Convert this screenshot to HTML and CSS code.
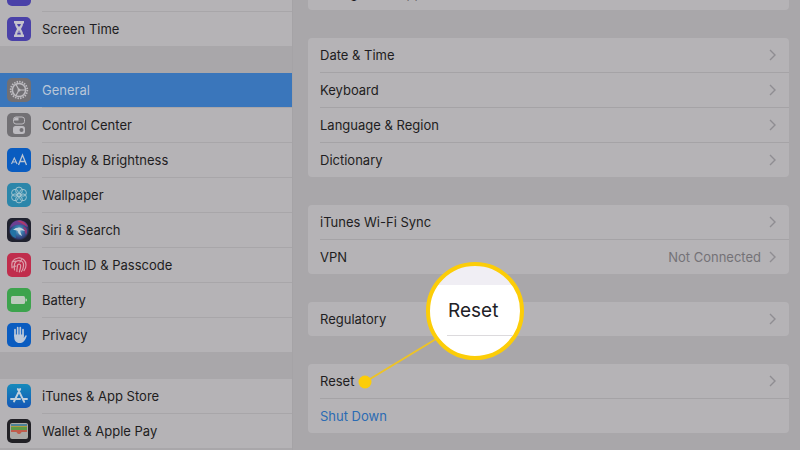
FILE: index.html
```html
<!DOCTYPE html>
<html lang="en">
<head>
<meta charset="utf-8">
<title>Settings</title>
<link rel="stylesheet" href="styles.css">
</head>
<body>
<svg class="defs" width="0" height="0" aria-hidden="true">
  <symbol id="chevron" viewBox="0 0 8 12"><path d="M1 1l5 5-5 5" fill="none" stroke="#8f8d92" stroke-width="1.4"/></symbol>
</svg>
<div class="settings">
<nav class="sidebar">
  <ul class="group">
    <li><a class="item" href="#dnd">
      <svg class="icon" viewBox="0 0 24 24"><rect width="24" height="24" rx="5" fill="#4a41a8"/><path d="M13 5a6 6 0 1 0 5 8A6 6 0 0 1 13 5z" fill="#c4c2cc"/></svg>
      <span class="label">Do Not Disturb</span></a></li>
    <li><a class="item" href="#screen-time">
      <svg class="icon" viewBox="0 0 24 24"><rect width="24" height="24" rx="5" fill="#4a41a8"/><path d="M7 4h10v2.500h-1c0 3-1.500 4-2 5.500.5 1.500 2 2.500 2 5.500h1V20H7v-2.500h1c0-3 1.500-4 2-5.500-.5-1.500-2-2.500-2-5.500H7z" fill="#c4c2cc"/><path d="M10 7h4l-1.500 3h-1zM11.500 13.500h1l1.500 4h-4z" fill="#4a41a8"/><path d="M12 9v7" stroke="#c4c2cc"/></svg>
      <span class="label">Screen Time</span></a></li>
  </ul>
  <ul class="group">
    <li><a class="item selected" href="#general">
      <svg class="icon" viewBox="0 0 24 24"><rect width="24" height="24" rx="5" fill="#727074"/><g fill="none" stroke="#bdbbc0"><circle cx="12" cy="12" r="8.3" stroke-width="1.8" stroke-dasharray="1.5 1.1"/><circle cx="12" cy="12" r="6.6" stroke-width="1.5"/><path d="M12 12h6M12 12l-3-5.500M12 12l-3 5.500" stroke-width="1.200"/></g><circle cx="12" cy="12" r="1.500" fill="#bdbbc0"/></svg>
      <span class="label">General</span></a></li>
    <li><a class="item" href="#control-center">
      <svg class="icon" viewBox="0 0 24 24"><rect width="24" height="24" rx="5" fill="#727074"/><rect x="6.500" y="4" width="11" height="7" rx="2.500" fill="none" stroke="#bdbbc0"/><path d="M7 7.500h4.500V4.500H9a2 2 0 0 0-2 2z" fill="#bdbbc0"/><rect x="6" y="13" width="12" height="8" rx="2.500" fill="#bdbbc0"/><circle cx="14.500" cy="17" r="2" fill="#727074"/></svg>
      <span class="label">Control Center</span></a></li>
    <li><a class="item" href="#display">
      <svg class="icon" viewBox="0 0 24 24"><rect width="24" height="24" rx="5" fill="#0a5cc0"/><g fill="none" stroke="#b9c4d4"><path d="M4.500 16l2.800-6 2.800 6M5.500 14h3.600" stroke-width="1.100"/><path d="M11.500 17l4-10 4 10M13 13.500h5" stroke-width="1.300"/></g></svg>
      <span class="label">Display &amp; Brightness</span></a></li>
    <li><a class="item" href="#wallpaper">
      <svg class="icon" viewBox="0 0 24 24"><rect width="24" height="24" rx="5" fill="#2b86aa"/><g fill="none" stroke="#9fc4d0"><circle cx="12" cy="7.500" r="3.400"/><circle cx="12" cy="16.500" r="3.400"/><circle cx="8" cy="9.800" r="3.400"/><circle cx="16" cy="9.800" r="3.400"/><circle cx="8" cy="14.300" r="3.400"/><circle cx="16" cy="14.300" r="3.400"/><circle cx="12" cy="12" r="2"/></g></svg>
      <span class="label">Wallpaper</span></a></li>
    <li><a class="item" href="#siri">
      <svg class="icon" viewBox="0 0 24 24"><defs><radialGradient id="siri"><stop offset="0" stop-color="#a9c6d8"/><stop offset=".35" stop-color="#3a7fb0"/><stop offset=".8" stop-color="#33407c"/><stop offset="1" stop-color="#20222f"/></radialGradient></defs><rect width="24" height="24" rx="5" fill="#20222f"/><circle cx="12" cy="12" r="10.500" fill="url(#siri)"/><path d="M3 10C4 3 12 0 18 4c2 2 3 3 3 5-5-3-12-4-18 1z" fill="#6d3f92"/><path d="M10 3c5-1 9 2 10 6-3-3-6-4-10-6z" fill="#b03a68"/><path d="M16 9c4 0 5 4 3 8-1-3-2-5-3-8z" fill="#903a78"/><path d="M3 13c2-3 5-4 9-4-3 2-4 7-3 11-4-1-6-4-6-7z" fill="#2373a4"/><path d="M6 12c4-4 9-3 12 1-3-1-5-1-5 0l2 5c-3-1-4-3-4-5-2-1-3-1-5-1z" fill="#c2d2dc"/></svg>
      <span class="label">Siri &amp; Search</span></a></li>
    <li><a class="item" href="#touch-id">
      <svg class="icon" viewBox="0 0 24 24"><rect width="24" height="24" rx="5" fill="#c02d4c"/><g fill="none" stroke="#dba0ac" stroke-width="1.200" stroke-linecap="round"><path d="M5 15c-1-5 1-9 6-10 4-.5 8 2 8 7 0 2-.5 4-2 5.500M7.500 17c-1-5 0-9 4.500-9.500 3 0 5 2 4.500 5.500-.2 2-.8 4-2 5.500M10 18.500c-.5-2 .5-4 .5-6 .2-2 3.200-2 3.200.3 0 2-.7 4-1.400 6.200M5 9l4-1M15 6l-2 3M6 14l3-1"/></g></svg>
      <span class="label">Touch ID &amp; Passcode</span></a></li>
    <li><a class="item" href="#battery">
      <svg class="icon" viewBox="0 0 24 24"><rect width="24" height="24" rx="5" fill="#3da34d"/><rect x="4" y="8" width="14" height="8" rx="1.500" fill="#bccabd"/><path d="M18.500 10.500c1 0 1.500.5 1.500 1.500s-.5 1.500-1.500 1.500z" fill="#bccabd"/></svg>
      <span class="label">Battery</span></a></li>
    <li><a class="item" href="#privacy">
      <svg class="icon" viewBox="0 0 24 24"><rect width="24" height="24" rx="5" fill="#0a5cc0"/><path d="M8 13V6.500M10.700 12V4.500M13.300 12V4.500M16 13V6.500" stroke="#bcc8d8" stroke-width="1.700" stroke-linecap="round"/><path d="M7.200 11.500h9.600V15l1.500-2.300c.6-.8 1.700-.3 1.300.7C18.500 16 17 20 12.500 20 9 20 7.200 17.500 7.200 14z" fill="#bcc8d8"/></svg>
      <span class="label">Privacy</span></a></li>
  </ul>
  <ul class="group">
    <li><a class="item" href="#store">
      <svg class="icon" viewBox="0 0 24 24"><defs><linearGradient id="store" x2="0" y2="1"><stop offset="0" stop-color="#168abb"/><stop offset="1" stop-color="#1457b6"/></linearGradient></defs><rect width="24" height="24" rx="5" fill="url(#store)"/><path d="M13.200 5L7 17.500M10.800 5l6.400 12.800M4 15h9M16 15h4" stroke="#c3d0dc" stroke-width="1.900" stroke-linecap="round"/></svg>
      <span class="label">iTunes &amp; App Store</span></a></li>
    <li><a class="item" href="#wallet">
      <svg class="icon" viewBox="0 0 24 24"><rect width="24" height="24" rx="5" fill="#222126"/><rect x="3" y="4" width="18" height="16" rx="2" fill="#aaa9a5"/><path fill="#4f8299" d="M4 5h16v2H4z"/><path fill="#b29a3c" d="M4 7h16v1H4z"/><path fill="#5e9a48" d="M4 8h16v3H4z"/><path fill="#c05d4c" d="M4 11h16v2h-5c-1 0-1 2-3 2s-2-2-3-2H4z"/></svg>
      <span class="label">Wallet &amp; Apple Pay</span></a></li>
  </ul>
</nav>
<main class="detail">
  <ul class="card">
    <li><a class="row" href="#refresh">Background App Refresh<svg class="chevron"><use href="#chevron"/></svg></a></li>
  </ul>
  <ul class="card">
    <li><a class="row" href="#date">Date &amp; Time<svg class="chevron"><use href="#chevron"/></svg></a></li>
    <li><a class="row" href="#keyboard">Keyboard<svg class="chevron"><use href="#chevron"/></svg></a></li>
    <li><a class="row" href="#language">Language &amp; Region<svg class="chevron"><use href="#chevron"/></svg></a></li>
    <li><a class="row" href="#dictionary">Dictionary<svg class="chevron"><use href="#chevron"/></svg></a></li>
  </ul>
  <ul class="card">
    <li><a class="row" href="#sync">iTunes Wi-Fi Sync<svg class="chevron"><use href="#chevron"/></svg></a></li>
    <li><a class="row" href="#vpn">VPN<span class="value">Not Connected</span><svg class="chevron"><use href="#chevron"/></svg></a></li>
  </ul>
  <ul class="card">
    <li><a class="row" href="#regulatory">Regulatory<svg class="chevron"><use href="#chevron"/></svg></a></li>
  </ul>
  <ul class="card">
    <li class="target">
      <a class="row" href="#reset">Reset<svg class="chevron"><use href="#chevron"/></svg></a>
      <!-- callout: pointer and magnified label -->
      <div class="callout">
        <svg class="pointer" viewBox="0 0 80 60"><path d="M7 53L78 10" stroke="#eec325" stroke-width="2"/><circle cx="7" cy="53" r="6.500" fill="#fccd08"/></svg>
        <div class="lens"><span class="lens-text">Reset</span></div>
      </div>
    </li>
    <li><button class="row shutdown" type="button">Shut Down</button></li>
  </ul>
</main>
</div>
</body>
</html>
```

FILE: styles.css
```css
* {
  box-sizing: border-box;
}

body {
  margin: 0;
  background: #a9a7aa;
  color: #1e1d21;
  font-family: Inter, "Liberation Sans", sans-serif;
  font-size: 13px;
  line-height: 18px;
}

ul {
  list-style: none;
  margin: 0;
  padding: 0;
}

a {
  color: inherit;
  text-decoration: none;
}

.defs {
  position: absolute;
}

.settings {
  display: flex;
  height: 100vh;
  overflow: hidden;
}

/* left column, scrolled a little */
.sidebar {
  flex: 0 0 293px;
  border-right: 1px solid #a5a3a6;
  margin-top: -23px;
}

.group {
  background: #b5b3b6;
  margin-bottom: 27px;
}

.item {
  display: flex;
  align-items: center;
  gap: 11px;
  padding-left: 7px;
}

.icon {
  width: 24px;
  height: 24px;
  flex: none;
}

.label {
  flex: 1;
  padding: 8px 0;
}

li + li .label {
  border-top: 1px solid #a8a6a9;
}

.selected {
  background: #3a76bb;
  color: #b9c6d8;
}

/* right column */
.detail {
  flex: 1;
  margin-top: -24px;
  padding: 0 11px 0 15px;
}

.card {
  background: #b5b3b6;
  border-radius: 4px;
  margin-bottom: 28px;
  padding-left: 12px;
}

.card li + li {
  border-top: 1px solid #a5a3a6;
}

.row {
  display: flex;
  align-items: center;
  width: 100%;
  padding: 8px 12px 8px 0;
}

.chevron {
  width: 8px;
  height: 12px;
  margin-left: auto;
}

.value {
  margin-left: auto;
  color: #747277;
}

.value + .chevron {
  margin-left: 8px;
}

.shutdown {
  border: 0;
  background: none;
  color: #2b6bb3;
  font: inherit;
  text-align: left;
  cursor: pointer;
}

.target {
  position: relative;
}

.callout {
  position: absolute;
  left: 38px;
  top: -102px;
  width: 166px;
  height: 127px;
  pointer-events: none;
}

.pointer {
  position: absolute;
  left: 0;
  bottom: 0;
  width: 80px;
  height: 60px;
}

.lens {
  position: absolute;
  right: 0;
  top: 0;
  width: 98px;
  height: 98px;
  border: 4px solid #fccd08;
  border-radius: 50%;
  overflow: hidden;
  background: linear-gradient(#f0eef4 19px, #fff 19px);
  padding: 19px 0 0 17px;
}

.lens-text {
  display: block;
  padding: 14px 0 12px 1px;
  border-bottom: 1px solid #dcdadd;
  color: #222126;
  font-size: 19px;
  line-height: 24px;
}
```
